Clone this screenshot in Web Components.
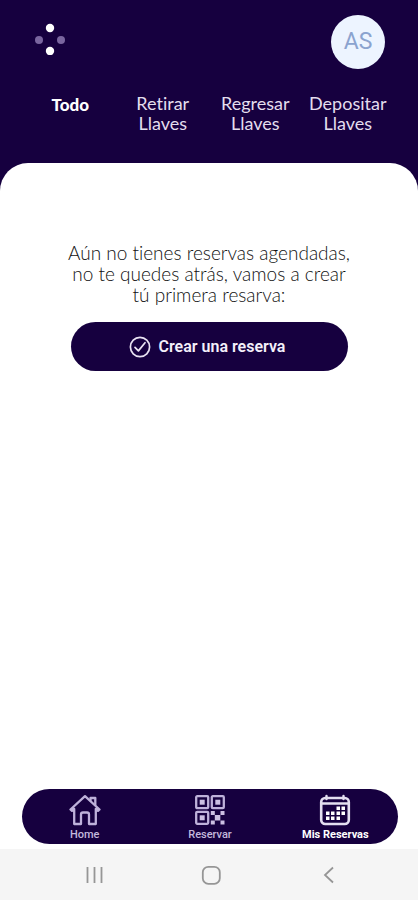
<!DOCTYPE html>
<html lang="es">
<head>
<meta charset="utf-8">
<meta name="viewport" content="width=device-width, initial-scale=1">
<title>Mis Reservas</title>
<style>
  body { margin: 0; background: #16003f; font-family: Lato, "Open Sans", sans-serif; font-variant-ligatures: none; }
</style>
</head>
<body>
<reservas-app></reservas-app>
<script>
const define = (name, html) => customElements.define(name, class extends HTMLElement {
  constructor() {
    super();
    const tpl = document.createElement('template');
    tpl.innerHTML = html;
    this.attachShadow({ mode: 'open' }).append(tpl.content.cloneNode(true));
  }
});

define('brand-logo', `
<style>
  :host { display: block; width: 32px; height: 32px; }
  svg { display: block; }
</style>
<svg width="32" height="32" viewBox="0 0 32 32" aria-hidden="true">
  <circle cx="16" cy="5" r="4.2" fill="#fff"/><circle cx="16" cy="28" r="4.2" fill="#fff"/>
  <circle cx="5" cy="17" r="4" fill="#7a669f"/><circle cx="27" cy="17" r="4" fill="#7a669f"/>
</svg>`);

define('user-avatar', `
<style>
  :host { display: block; }
  button { display: block; width: 54px; height: 54px; border: 0; border-radius: 50%; padding: 0; background: #edf4ff;
    color: #8ba3cf; font: 400 23px/54px Roboto, sans-serif; }
</style>
<button type="button"><slot></slot></button>`);

define('filter-tab', `
<style>
  :host { display: block; }
  button { display: block; width: 100%; border: 0; padding: 0; background: none; color: #e4deee;
    font: 400 18px/20px Lato, sans-serif; font-variant-ligatures: none; text-align: center; }
  :host([active]) button { color: #fff; font-size: 17px; font-weight: 900; padding-top: 2px; }
</style>
<button type="button"><slot></slot></button>`);

define('app-header', `
<style>
  :host { display: block; padding: 15px 24px 30px; background: #16003f; }
  .top { display: flex; justify-content: space-between; align-items: flex-start; padding: 0 9px 0 10px; }
  brand-logo { margin-top: 8px; }
  nav { display: grid; grid-template-columns: repeat(4, 1fr); align-items: start; margin-top: 24px; }
</style>
<div class="top"><brand-logo></brand-logo><user-avatar>AS</user-avatar></div>
<nav>
  <filter-tab active>Todo</filter-tab>
  <filter-tab>Retirar<br>Llaves</filter-tab>
  <filter-tab>Regresar<br>Llaves</filter-tab>
  <filter-tab>Depositar<br>Llaves</filter-tab>
</nav>`);

define('primary-button', `
<style>
  :host { display: block; }
  button { display: flex; align-items: center; justify-content: center; gap: 8px; width: 100%; height: 49px;
    border: 0; border-radius: 25px; padding: 0 5px 0 0; background: #16003f; color: #f4f0fa;
    font: 600 16px/20px Roboto, sans-serif; }
</style>
<button type="button">
  <svg width="22" height="22" viewBox="0 0 22 22" fill="none" stroke="#e9e2f2" stroke-width="1.7" aria-hidden="true">
    <circle cx="11" cy="11" r="9.6"/><path d="M6 11.3l3.4 3.6 6.6-8.2" stroke-linecap="round" stroke-linejoin="round"/>
  </svg>
  <span><slot></slot></span>
</button>`);

define('empty-state', `
<style>
  :host { display: block; padding: 79px 64px 0; text-align: center; }
  p { margin: 0 -10px; color: #111; font: 300 19px/21px Lato, sans-serif; font-variant-ligatures: none; }
  primary-button { margin: 17px 6px 0 7px; }
</style>
<p>Aún no tienes reservas agendadas,<br>no te quedes atrás, vamos a crear<br>tú primera resarva:</p>
<primary-button>Crear una reserva</primary-button>`);

define('nav-item', `
<style>
  :host { display: block; }
  a { display: flex; flex-direction: column; align-items: center; gap: 3px; color: #c4b8dc;
    font: 500 11px/12px Roboto, sans-serif; text-decoration: none; }
  :host([active]) a { color: #fff; font-weight: 700; }
  ::slotted(svg) { display: block; }
</style>
<a href="#"><slot name="icon"></slot><span><slot></slot></span></a>`);

define('bottom-nav', `
<style>
  :host { display: block; margin: 0 20px 5px 22px; }
  nav { display: grid; grid-template-columns: repeat(3, 1fr); border-radius: 28px; padding: 5px 0 3px; background: #16003f; }
</style>
<nav>
  <nav-item>
    <svg slot="icon" width="32" height="32" viewBox="0 0 32 32" fill="none" stroke="#beb1da" stroke-width="2.3" stroke-linejoin="round" stroke-linecap="round" aria-hidden="true">
      <path d="M1.500 15.500L16 2.200l14.500 13.300-1.500 1.300-2.200-1.800V30H20v-9.500q0-2-2-2h-4q-2 0-2 2V30H5.200V15L3 16.800z"/>
      <path d="M21.500 6.500V4h4.800v7"/>
    </svg>Home
  </nav-item>
  <nav-item>
    <svg slot="icon" width="32" height="32" viewBox="0 0 32 32" aria-hidden="true">
      <g fill="none" stroke="#beb1da" stroke-width="2.300">
        <rect x="2.200" y="2.200" width="12" height="12" rx="1"/><rect x="17.800" y="2.200" width="12" height="12" rx="1"/><rect x="2.200" y="17.800" width="12" height="12" rx="1"/>
      </g>
      <g fill="#cbbfe2">
        <rect x="5.700" y="5.700" width="5" height="5"/><rect x="21.300" y="5.700" width="5" height="5"/><rect x="5.700" y="21.300" width="5" height="5"/>
        <rect x="16.800" y="17" width="4" height="4"/><rect x="26.500" y="17" width="4" height="4"/><rect x="20.800" y="21" width="5.500" height="5.500"/>
        <rect x="16.800" y="26.500" width="4" height="4"/><rect x="26.500" y="26.500" width="4" height="4"/>
      </g>
    </svg>Reservar
  </nav-item>
  <nav-item active>
    <svg slot="icon" width="32" height="32" viewBox="0 0 32 32" aria-hidden="true">
      <rect x="2.200" y="4" width="27.600" height="26" rx="4" fill="none" stroke="#e4dff0" stroke-width="2.600"/>
      <path d="M3 9.500h26M7.500 2v3M24.500 2v3" fill="none" stroke="#e4dff0" stroke-width="2.400" stroke-linecap="round"/>
      <g fill="#fff">
        <rect x="17.500" y="12.500" width="3.500" height="3.500"/><rect x="22.500" y="12.500" width="3.500" height="3.500"/>
        <rect x="7" y="17.500" width="3.500" height="3.500"/><rect x="12" y="17.500" width="3.500" height="3.500"/><rect x="17.500" y="17.500" width="3.500" height="3.500"/><rect x="22.500" y="17.500" width="3.500" height="3.500"/>
        <rect x="7" y="22.500" width="3.500" height="3.500"/><rect x="12" y="22.500" width="3.500" height="3.500"/><rect x="17.500" y="22.500" width="3.500" height="3.500"/>
      </g>
    </svg>Mis Reservas
  </nav-item>
</nav>`);

define('system-bar', `
<style>
  :host { display: grid; grid-template-columns: repeat(3, 1fr); height: 51px; padding: 0 32px 0 36px; background: #f5f5f5; }
  button { display: grid; place-items: center; border: 0; padding: 0; background: none; }
  svg { display: block; fill: none; stroke: #969696; stroke-width: 1.8; }
</style>
<button type="button" aria-label="Recientes"><svg width="20" height="20" viewBox="0 0 20 20"><path d="M3.500 2v16M10.500 2v16M17.500 2v16"/></svg></button>
<button type="button" aria-label="Inicio"><svg width="20" height="20" viewBox="0 0 20 20"><rect x="1.800" y="1.800" width="17" height="17" rx="5.500"/></svg></button>
<button type="button" aria-label="Atrás"><svg width="20" height="20" viewBox="0 0 20 20"><path d="M15 2.500L7 10l8 7.500"/></svg></button>`);

define('reservas-app', `
<style>
  :host { display: flex; flex-direction: column; min-height: 100vh; background: #16003f; }
  main { flex: 1; display: flex; flex-direction: column; background: #fff; border-radius: 28px 28px 0 0; }
  empty-state { flex: 1; }
</style>
<app-header></app-header>
<main><empty-state></empty-state><bottom-nav></bottom-nav></main>
<system-bar></system-bar>`);
</script>
</body>
</html>
